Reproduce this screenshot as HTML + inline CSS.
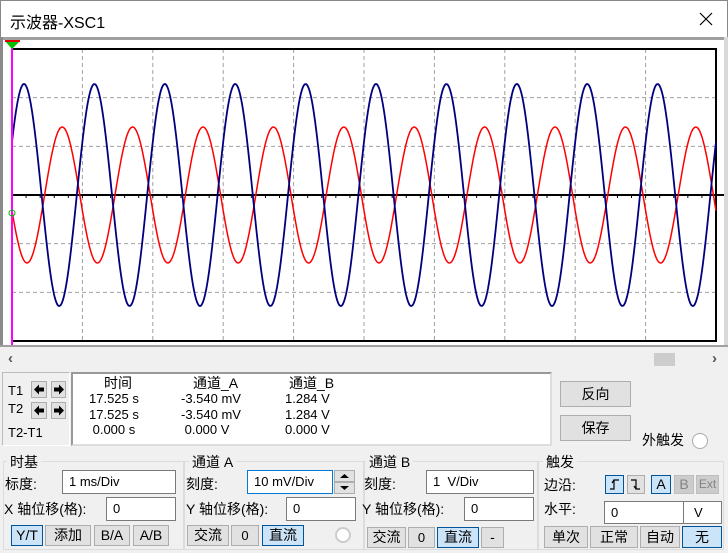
<!DOCTYPE html>
<html><head><meta charset="utf-8"><style>
*{margin:0;padding:0;box-sizing:border-box}
body{width:728px;height:553px;overflow:hidden;background:#f0f0f0;font-family:"Liberation Sans","Noto Sans CJK SC",sans-serif;font-size:13px;color:#000;position:relative}
.a{position:absolute;white-space:nowrap}
.btn{position:absolute;background:#e1e1e1;border:1px solid #adadad;text-align:center;font-size:14px}
.btn svg{display:block;margin:auto}
.blue{background:#cce4f7;border:1px solid #005499}
.dis{background:#cccccc;border:1px solid #bfbfbf;color:#838383}
.inp{position:absolute;background:#fff;border:1px solid #7a7a7a;padding-left:6px;font-size:13px}
.grp{position:absolute;border:1px solid #dcdcdc}
.gt{position:absolute;background:#f0f0f0;padding:0 3px;font-size:14px}
</style></head><body>
<div class="a" style="left:0;top:0;width:728px;height:38px;background:#fff;border:1px solid #888;border-bottom:none"></div>
<div class="a" style="left:10px;top:9px;font-size:16px">示波器-XSC1</div>
<svg class="a" style="left:699px;top:12px" width="14" height="14"><path d="M1 1L13 13M13 1L1 13" stroke="#000" stroke-width="1.2"/></svg>
<div class="a" style="left:0;top:37px;width:728px;height:3px;background:#a0a0a0"></div>
<div class="a" style="left:0;top:37px;width:3px;height:310px;background:#8a8a8a"></div>
<div class="a" style="left:724px;top:37px;width:4px;height:310px;background:#d8d8d8"></div>
<div class="a" style="left:0;top:345px;width:728px;height:2px;background:#a0a0a0"></div>
<svg class="a" style="left:3px;top:40px;background:#fff" width="721" height="305" id="sv"></svg>
<div class="a" style="left:8px;top:350px;font-size:15px;color:#555;font-weight:bold">‹</div>
<div class="a" style="left:654px;top:353px;width:21px;height:13px;background:#cdcdcd"></div>
<div class="a" style="left:712px;top:350px;font-size:15px;color:#555;font-weight:bold">›</div>
<div class="a" style="left:2px;top:372px;width:68px;height:74px;border:1px solid #bbb;border-right-color:#fff;border-bottom-color:#fff"></div>
<div class="a" style="left:8px;top:383px">T1</div>
<div class="a" style="left:8px;top:401px">T2</div>
<div class="a" style="left:8px;top:425px">T2-T1</div>
<div class="btn" style="left:31px;top:381px;width:16px;height:17px"><svg width="14" height="15"><path d="M2 7.5L7 2.5V5.5H12V9.5H7V12.5Z" fill="#000"/></svg></div>
<div class="btn" style="left:51px;top:381px;width:15px;height:17px"><svg width="13" height="15"><path d="M12 7.5L7 2.5V5.5H2V9.5H7V12.5Z" fill="#000"/></svg></div>
<div class="btn" style="left:31px;top:402px;width:16px;height:17px"><svg width="14" height="15"><path d="M2 7.5L7 2.5V5.5H12V9.5H7V12.5Z" fill="#000"/></svg></div>
<div class="btn" style="left:51px;top:402px;width:15px;height:17px"><svg width="13" height="15"><path d="M12 7.5L7 2.5V5.5H2V9.5H7V12.5Z" fill="#000"/></svg></div>
<div class="a" style="left:71px;top:372px;width:481px;height:74px;background:#fff;border:2px solid #999;border-right-color:#ddd;border-bottom-color:#ddd"></div>
<div class="a" style="left:104px;top:373px;font-size:14px">时间</div>
<div class="a" style="left:193px;top:373px;font-size:14px">通道_A</div>
<div class="a" style="left:289px;top:373px;font-size:14px">通道_B</div>
<div class="a" style="left:89px;top:391px;font-size:13px;line-height:15.5px">17.525 s<br>17.525 s<br>&nbsp;0.000 s</div>
<div class="a" style="left:181px;top:391px;font-size:13px;line-height:15.5px">-3.540 mV<br>-3.540 mV<br>&nbsp;0.000 V</div>
<div class="a" style="left:285px;top:391px;font-size:13px;line-height:15.5px">1.284 V<br>1.284 V<br>0.000 V</div>
<div class="btn" style="left:560px;top:381px;width:71px;height:26px;line-height:24px">反向</div>
<div class="btn" style="left:560px;top:415px;width:71px;height:26px;line-height:24px">保存</div>
<div class="a" style="left:642px;top:430px;font-size:14px">外触发</div>
<div class="a" style="left:692px;top:433px;width:16px;height:16px;border-radius:50%;background:#fff;border:1px solid #aaa"></div>

<div class="grp" style="left:3px;top:461px;width:181px;height:89px"></div>
<div class="gt" style="left:7px;top:452px">时基</div>
<div class="a" style="left:5px;top:474px;font-size:14px">标度:</div>
<div class="inp" style="left:62px;top:470px;width:114px;height:24px;line-height:22px">1 ms/Div</div>
<div class="a" style="left:4px;top:499px;font-size:14px">X 轴位移(格):</div>
<div class="inp" style="left:106px;top:497px;width:70px;height:24px;line-height:22px">0</div>
<div class="btn blue" style="left:11px;top:525px;width:32px;height:21px;line-height:19px">Y/T</div>
<div class="btn" style="left:45px;top:525px;width:46px;height:21px;line-height:19px">添加</div>
<div class="btn" style="left:94px;top:525px;width:36px;height:21px;line-height:19px">B/A</div>
<div class="btn" style="left:133px;top:525px;width:36px;height:21px;line-height:19px">A/B</div>

<div class="grp" style="left:184px;top:461px;width:180px;height:89px"></div>
<div class="gt" style="left:189px;top:452px">通道 A</div>
<div class="a" style="left:186px;top:474px;font-size:14px">刻度:</div>
<div class="inp" style="left:247px;top:470px;width:86px;height:24px;line-height:22px;border-color:#0078d7">10 mV/Div</div>
<div class="btn" style="left:334px;top:470px;width:21px;height:12px"><svg width="19" height="10"><path d="M5 7H14L9.5 3Z" fill="#000"/></svg></div>
<div class="btn" style="left:334px;top:482px;width:21px;height:12px"><svg width="19" height="10"><path d="M5 3H14L9.5 7Z" fill="#000"/></svg></div>
<div class="a" style="left:186px;top:499px;font-size:14px">Y 轴位移(格):</div>
<div class="inp" style="left:286px;top:497px;width:70px;height:24px;line-height:22px">0</div>
<div class="btn" style="left:187px;top:525px;width:42px;height:21px;line-height:19px">交流</div>
<div class="btn" style="left:231px;top:525px;width:28px;height:21px;line-height:19px;font-size:13px">0</div>
<div class="btn blue" style="left:262px;top:525px;width:42px;height:21px;line-height:19px">直流</div>
<div class="a" style="left:335px;top:527px;width:16px;height:16px;border-radius:50%;background:#fff;border:2px solid #ccc"></div>

<div class="grp" style="left:364px;top:461px;width:174px;height:89px"></div>
<div class="gt" style="left:366px;top:452px">通道 B</div>
<div class="a" style="left:364px;top:474px;font-size:14px">刻度:</div>
<div class="inp" style="left:426px;top:470px;width:108px;height:24px;line-height:22px">1&nbsp; V/Div</div>
<div class="a" style="left:362px;top:499px;font-size:14px">Y 轴位移(格):</div>
<div class="inp" style="left:464px;top:497px;width:70px;height:24px;line-height:22px">0</div>
<div class="btn" style="left:367px;top:527px;width:39px;height:21px;line-height:19px">交流</div>
<div class="btn" style="left:408px;top:527px;width:27px;height:21px;line-height:19px;font-size:13px">0</div>
<div class="btn blue" style="left:437px;top:527px;width:42px;height:21px;line-height:19px">直流</div>
<div class="btn" style="left:481px;top:527px;width:23px;height:21px;line-height:19px">-</div>

<div class="grp" style="left:538px;top:461px;width:186px;height:89px"></div>
<div class="gt" style="left:543px;top:452px">触发</div>
<div class="a" style="left:544px;top:475px;font-size:14px">边沿:</div>
<div class="btn blue" style="left:605px;top:475px;width:19px;height:19px"><svg width="17" height="17"><path d="M4 13H8V4H13M6 7L8 4" stroke="#000" fill="none" stroke-width="1.2"/></svg></div>
<div class="btn" style="left:627px;top:475px;width:18px;height:19px"><svg width="16" height="17"><path d="M3 4H8V13H12M6 10L8 13" stroke="#000" fill="none" stroke-width="1.2"/></svg></div>
<div class="btn blue" style="left:651px;top:475px;width:20px;height:19px;line-height:17px">A</div>
<div class="btn dis" style="left:674px;top:475px;width:20px;height:19px;line-height:17px">B</div>
<div class="btn dis" style="left:696px;top:475px;width:23px;height:19px;line-height:17px;font-size:12px">Ext</div>
<div class="a" style="left:544px;top:499px;font-size:14px">水平:</div>
<div class="inp" style="left:604px;top:501px;width:80px;height:23px;line-height:21px">0</div>
<div class="inp" style="left:683px;top:501px;width:39px;height:23px;line-height:21px;padding-left:10px">V</div>
<div class="btn" style="left:544px;top:526px;width:44px;height:22px;line-height:20px">单次</div>
<div class="btn" style="left:590px;top:526px;width:48px;height:22px;line-height:20px">正常</div>
<div class="btn" style="left:640px;top:526px;width:40px;height:22px;line-height:20px">自动</div>
<div class="btn blue" style="left:682px;top:526px;width:40px;height:22px;line-height:20px">无</div>
<script>
(function(){
var s='';var top=9,bot=301,L=9,R=713,cy=155;
for(var k=1;k<10;k++){var x=L+k*70.4;s+='<line x1="'+x+'" y1="'+top+'" x2="'+x+'" y2="'+bot+'" stroke="#a0a0a0" stroke-dasharray="4,3"/>';}
for(var k=1;k<6;k++){if(k==3)continue;var y=top+k*48.67;s+='<line x1="'+L+'" y1="'+y+'" x2="'+R+'" y2="'+y+'" stroke="#a0a0a0" stroke-dasharray="4,3"/>';}
s+='<line x1="'+L+'" y1="'+cy+'" x2="'+(R+8)+'" y2="'+cy+'" stroke="#000" stroke-width="2"/>';
for(var k=0;k<=50;k++){var x=L+k*14.08;s+='<line x1="'+x+'" y1="'+cy+'" x2="'+x+'" y2="'+(cy+3)+'" stroke="#000"/>';}
s+='<rect x="'+L+'" y="'+top+'" width="'+(R-L)+'" height="'+(bot-top)+'" fill="none" stroke="#000" stroke-width="2"/>';
var r='',b='';
for(var x=L;x<=R;x+=1){var X=x+3;
var yr=cy+68*Math.cos(2*Math.PI*(X-27)/70.4);
var yb=cy-111*Math.cos(2*Math.PI*(X-24)/70.4);
r+=(x==L?'M':'L')+x+','+yr.toFixed(1);b+=(x==L?'M':'L')+x+','+yb.toFixed(1);}
s+='<path d="'+r+'" fill="none" stroke="#ff0000" stroke-width="1.5"/>';
s+='<path d="'+b+'" fill="none" stroke="#000080" stroke-width="1.8"/>';
s+='<line x1="9" y1="0" x2="9" y2="305" stroke="#ff00ff" stroke-width="2"/>';
s+='<polygon points="2,1 17,1 9,9" fill="#00c000"/><rect x="2" y="0" width="15" height="2" fill="#e00000"/>';
s+='<circle cx="9" cy="173" r="3" fill="none" stroke="#00c000"/>';
document.getElementById('sv').innerHTML=s;
})();
</script>
</body></html>
